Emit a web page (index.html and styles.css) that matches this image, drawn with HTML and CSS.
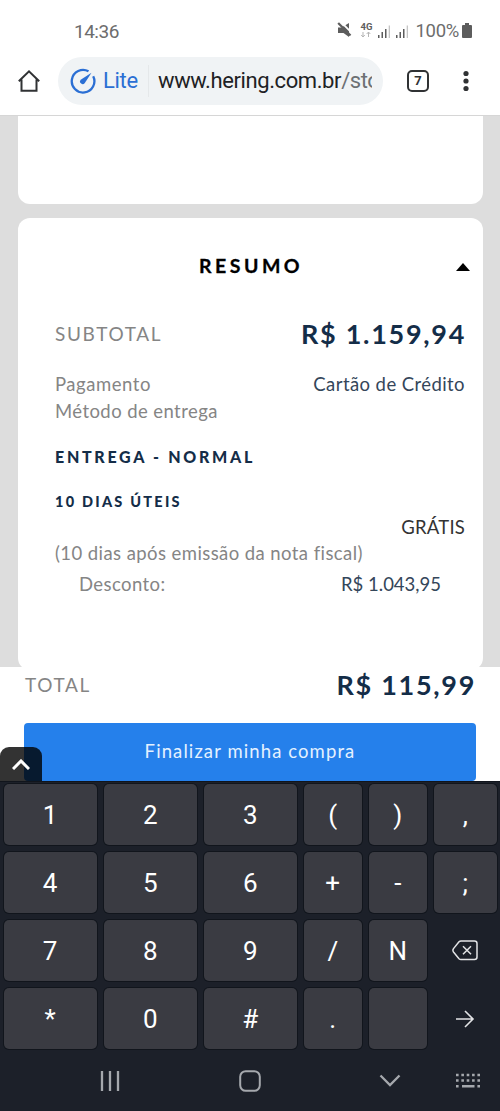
FILE: index.html
```
<!DOCTYPE html>
<html lang="pt-BR">
<head>
<meta charset="utf-8">
<title>Hering - Resumo</title>
<link rel="stylesheet" href="styles.css">
</head>
<body>
<div class="phone">
  <header class="chrome">
    <div class="status">
      <span class="clock">14:36</span>
      <svg class="status-icons" width="78" height="20" viewBox="0 0 78 20">
        <g fill="#5d5d5d">
          <path d="M1 6.500h3.500L12 2v14l-5.500-4H1z"/>
          <path d="M4.300 1.300l11 11" stroke="#fff" stroke-width="1.800"/>
          <path d="M1.200 2l12.300 12.500" stroke="#5d5d5d" stroke-width="2.200"/>
          <text class="net" x="23.500" y="9">4G</text>
          <path d="M26 11v5m-1.800-2l1.800 2 1.800-2M31.500 16v-5m-1.800 2l1.800-2 1.800 2" fill="none" stroke="#b5b5b5"/>
          <path d="M41 14h1.500v3H41zM44.500 11h1.500v6h-1.500zM48 8h1.500v9H48zM59 14h1.500v3H59zM62.500 11h1.500v6h-1.500zM66 8h1.500v9H66z"/>
          <path fill="#c4c4c4" d="M51.700 4.500H53V17h-1.300zM69.700 4.500H71V17h-1.300z"/>
        </g>
      </svg>
      <span class="percent">100%</span>
      <svg class="battery" width="10" height="16" viewBox="0 0 10 16"><path fill="#5d5d5d" d="M3 0h4v2h2q1 0 1 1v11q0 1-1 1H1q-1 0-1-1V3q0-1 1-1h2z"/></svg>
    </div>
    <div class="toolbar">
      <svg class="home" width="24" height="24" viewBox="0 0 24 24"><path fill="none" stroke="#303234" stroke-width="2" d="M1.800 12.300L12 2.300l10.200 10M4.500 10.500v11.200h15V10.500"/></svg>
      <div class="address">
        <svg width="26" height="26" viewBox="0 0 26 26"><path fill="none" stroke="#2b6fd4" stroke-width="2.300" d="M18.500 3.300A11.300 11.300 0 1 0 23.200 8.200"/><path fill="#2b6fd4" d="M21.500 4.800L14.800 15a2.600 2.600 0 1 1-3.700-3.600z"/></svg>
        <span class="lite">Lite</span>
        <span class="url">www.hering.com.br<span class="path">/sto</span></span>
      </div>
      <span class="tabs">7</span>
      <svg class="more" width="6" height="22" viewBox="0 0 6 22"><g fill="#303234"><circle cx="3" cy="3.500" r="2.600"/><circle cx="3" cy="11" r="2.600"/><circle cx="3" cy="18.500" r="2.600"/></g></svg>
    </div>
  </header>

  <main class="page">
    <section class="card previous"></section>
    <section class="card summary">
      <div class="heading"><h1>RESUMO</h1><svg width="14" height="8" viewBox="0 0 14 8"><path d="M7 0l7 8H0z"/></svg></div>
      <div class="row subtotal"><span class="caps">SUBTOTAL</span><strong class="amount">R$ 1.159,94</strong></div>
      <div class="row payment"><span>Pagamento</span><span class="navy credit">Cartão de Crédito</span></div>
      <div class="row method"><span>Método de entrega</span></div>
      <div class="row shipping">ENTREGA - NORMAL</div>
      <div class="row days">10 DIAS ÚTEIS</div>
      <div class="row free">GRÁTIS</div>
      <div class="row note">(10 dias após emissão da nota fiscal)</div>
      <div class="row discount"><span>Desconto:</span><span class="navy reduction">R$ 1.043,95</span></div>
    </section>
  </main>

  <footer class="checkout">
    <div class="row total"><span class="caps total-label">TOTAL</span><strong class="amount total-amount">R$ 115,99</strong></div>
    <div class="buy">Finalizar minha compra</div>
    <div class="expand"><svg width="18" height="11" viewBox="0 0 18 11"><path fill="none" stroke="#fff" stroke-width="3" d="M1 10l8-8 8 8"/></svg></div>
  </footer>

  <section class="keyboard">
    <div class="keys">
      <span class="key">1</span><span class="key">2</span><span class="key">3</span><span class="key">(</span><span class="key">)</span><span class="key">,</span>
      <span class="key">4</span><span class="key">5</span><span class="key">6</span><span class="key">+</span><span class="key">-</span><span class="key">;</span>
      <span class="key">7</span><span class="key">8</span><span class="key">9</span><span class="key">/</span><span class="key">N</span>
      <span class="key bare"><svg width="26" height="21" viewBox="0 0 26 21"><path fill="none" stroke="#e3e4e6" stroke-width="1.500" stroke-linejoin="round" d="M9 1h13.500q2.500 0 2.500 2.500v13.500q0 2.500-2.500 2.500H9q-1.200 0-2-.8L1.500 12q-1.200-1.700 0-3.400L7 1.800Q7.800 1 9 1zM11 6.300l8 8m0-8l-8 8"/></svg></span>
      <span class="key">*</span><span class="key">0</span><span class="key">#</span><span class="key">.</span><span class="key"></span>
      <span class="key bare"><svg width="20" height="18" viewBox="0 0 20 18"><path fill="none" stroke="#e3e4e6" stroke-width="1.600" d="M1 9h17M10 1l8 8-8 8"/></svg></span>
    </div>
    <nav class="nav">
      <svg width="20" height="22" viewBox="0 0 20 22"><path stroke="#a5a8ad" stroke-width="2.300" d="M2 1v20M10 1v20M18 1v20"/></svg>
      <svg width="22" height="22" viewBox="0 0 22 22"><rect x="1.200" y="1.200" width="19.600" height="19.600" rx="5.500" fill="none" stroke="#a5a8ad" stroke-width="2"/></svg>
      <svg width="22" height="14" viewBox="0 0 22 14"><path fill="none" stroke="#a5a8ad" stroke-width="2.300" d="M1.500 1.500L11 11l9.500-9.500"/></svg>
      <svg width="26" height="16" viewBox="0 0 26 16"><path stroke="#a5a8ad" stroke-width="2.600" stroke-dasharray="2.600 2.750" d="M1 2h24.500M1 7.500h24.500"/><path stroke="#a5a8ad" stroke-width="2.600" d="M1 13.200h2.600M7 13.200h12.500M22.400 13.200H25"/></svg>
    </nav>
  </section>
</div>
</body>
</html>
```
FILE: styles.css
```
* { box-sizing: border-box; }
body { margin: 0; background: #fff; }
svg { display: block; flex: none; }
.phone { width: 500px; height: 1111px; overflow: hidden; display: flex; flex-direction: column; font-family: Roboto, sans-serif; }

.chrome { height: 115px; background: #fff; flex: none; }
.status { height: 57px; padding: 5px 28px 0 74px; display: flex; align-items: center; color: #6d6d6d; font-size: 19px; }
.clock { margin-right: auto; letter-spacing: -0.5px; }
.status-icons { margin-right: 0; }
.net { font: 700 9.500px Roboto, sans-serif; }
.percent { font-size: 18.500px; letter-spacing: -0.3px; margin-right: 3px; }
.toolbar { height: 48px; display: flex; align-items: center; padding-left: 17px; }
.address { width: 325px; height: 48px; margin-left: 17px; padding: 0 11px 0 12px; border-radius: 24px; background: #f0f3f5; display: flex; align-items: center; font-size: 22px; white-space: nowrap; }
.lite { color: #2b6fd4; margin-left: 7px; width: 46px; height: 32px; line-height: 32px; border-right: 1px solid #e5e8ea; letter-spacing: -0.3px; }
.url { margin-left: 9px; flex: 1; overflow: hidden; color: #202124; line-height: 32px; letter-spacing: -0.4px; }
.path { color: #6c7073; }
.tabs { width: 22px; height: 22px; margin-left: 24px; border: 2px solid #303234; border-radius: 5px; color: #303234; font-weight: 700; font-size: 13px; line-height: 18px; text-align: center; }
.more { margin-left: 34px; }

.page { height: 552px; flex: none; padding: 0 17px 0 18px; background: #ddd; border-top: 1px solid #d6d6d6; overflow: hidden; font-family: Lato, sans-serif; }
.card { background: #fff; border-radius: 12px; }
.previous { height: 88px; border-radius: 0 0 12px 12px; }
.summary { height: 452px; margin-top: 14px; padding: 0 18px 0 37px; color: #858585; font-size: 18.500px; letter-spacing: 0.42px; }
.heading { height: 95px; display: flex; align-items: center; margin-right: -5px; }
.heading h1 { margin: 0 auto 0 144px; font-size: 19.500px; font-weight: 700; color: #000; letter-spacing: 3.5px; -webkit-text-stroke: 0.3px #000; }
.heading svg { margin-top: 3px; }
.row { display: flex; align-items: center; justify-content: space-between; white-space: nowrap; }
.caps { font-size: 19px; letter-spacing: 1.650px; }
.amount { font-size: 27px; font-weight: 700; color: #142d48; letter-spacing: 1.700px; margin-right: -1px; }
.subtotal { height: 42px; margin-top: -1px; }
.navy { color: #34465a; }
.payment { height: 27px; margin-top: 16px; letter-spacing: 0.550px; }
.credit { letter-spacing: 0.42px; }
.method { height: 27px; }
.shipping { height: 64px; font-size: 16px; font-weight: 900; color: #142d48; letter-spacing: 2.700px; }
.days { height: 26px; font-size: 14.500px; font-weight: 900; color: #142d48; letter-spacing: 2.250px; }
.free { height: 25px; justify-content: flex-end; color: #333; letter-spacing: 0.2px; }
.note { height: 27px; }
.discount { height: 35px; padding: 0 24px; }
.reduction { letter-spacing: 0; }

.checkout { position: relative; height: 114px; flex: none; padding: 0 24px; background: #fff; color: #858585; font-family: Lato, sans-serif; overflow: hidden; }
.total { height: 35px; margin: 0 1px 21px; }
.buy { height: 58px; border-radius: 4px; background: #2580eb; color: #e4f1ff; font-size: 18.500px; line-height: 57px; text-align: center; letter-spacing: 1.100px; }
.expand { position: absolute; left: 0; bottom: 0; width: 42px; height: 34px; border-radius: 9px 9px 0 0; background: rgba(0, 0, 0, 0.8); display: flex; align-items: center; justify-content: center; }

.keyboard { flex: 1; background: #1c2029; border-top: 1px solid #11151c; }
.keys { display: grid; grid-template-columns: 93px 92.500px 92.500px 57.500px 57.500px 62.500px; grid-auto-rows: 61px; gap: 7px 7.500px; padding: 2px 3.500px 0; }
.key { border-radius: 5px; background: #3a3b42; box-shadow: 0 0 0 1px #11151c; color: #fff; font-size: 26px; display: flex; align-items: center; justify-content: center; }
.bare { background: none; box-shadow: none; }
.nav { height: 63px; display: flex; align-items: center; padding-left: 100px; }
.nav svg:nth-child(2) { margin-left: 119px; }
.nav svg:nth-child(3) { margin-left: 118px; }
.nav svg:nth-child(4) { margin-left: 54px; }
```
